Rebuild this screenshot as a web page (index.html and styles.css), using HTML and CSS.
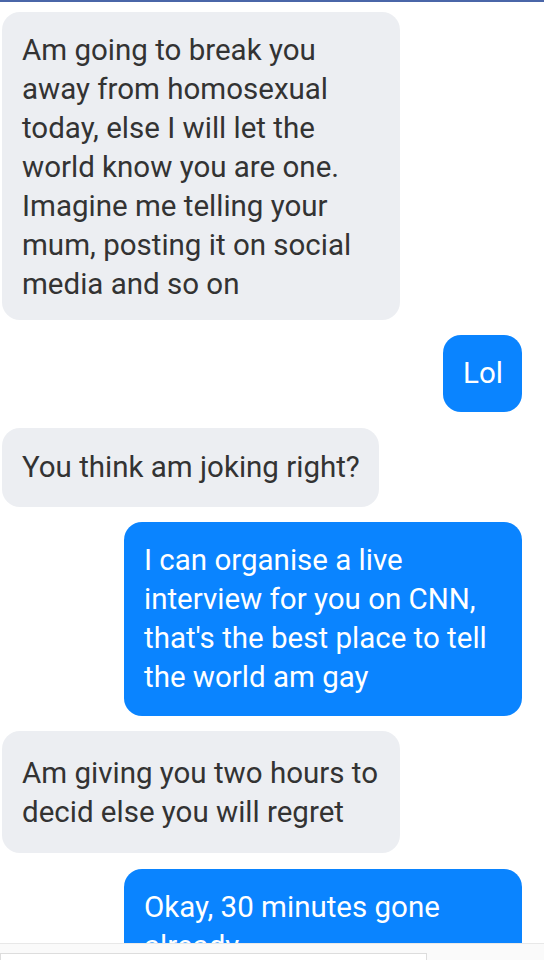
FILE: index.html
```html
<!DOCTYPE html>
<html lang="en">
<head>
    <meta charset="UTF-8">
    <meta name="viewport" content="width=device-width, initial-scale=1.0">
    <title>Chat</title>
    <link rel="stylesheet" href="styles.css">
</head>
<body>
    <div class="top-bar"></div>

    <div class="thread">
        <div class="msg theirs first">Am going to break you away from homosexual today, else I will let the world know you are one. Imagine me telling your mum, posting it on social media and so on</div>
        <div class="msg mine">Lol</div>
        <div class="msg theirs short">You think am joking right?</div>
        <div class="msg mine">I can organise a live interview for you on CNN, that's the best place to tell the world am gay</div>
        <div class="msg theirs tall">Am giving you two hours to decid else you will regret</div>
        <div class="msg mine last">Okay, 30 minutes gone already</div>
    </div>

    <div class="composer">
        <div class="composer-input"></div>
    </div>
</body>
</html>
```

FILE: styles.css
```css
body {
    margin: 0;
    background: #fff;
    font-family: Roboto, "Noto Sans", sans-serif;
}
.top-bar {
    height: 2px;
    background-color: #4a66a8;
}
.thread {
    height: 941px;
    overflow: hidden;
    display: flex;
    flex-direction: column;
    gap: 15px;
    padding: 10px 22px 0 2px;
    box-sizing: border-box;
}
.msg {
    flex-shrink: 0;
    max-width: 398px;
    box-sizing: border-box;
    padding: 19px 19px 19px 20px;
    border-radius: 18px;
    font-size: 29.5px;
    line-height: 39px;
}
.theirs {
    align-self: flex-start;
    background-color: #eceef2;
    color: #333;
}
.mine {
    align-self: flex-end;
    background-color: #0a84ff;
    color: #fff;
}
.first {
    padding-top: 19px;
    padding-bottom: 16px;
}
.short {
    margin-top: 1px;
    padding-top: 20px;
    padding-bottom: 20px;
}
.tall {
    padding-top: 23px;
    padding-bottom: 21px;
}
.last {
    margin-top: 1px;
}
.composer {
    height: 17px;
    border-top: 1px solid #e8e8e8;
    background: #fafafa;
    padding-top: 9px;
    box-sizing: border-box;
}
.composer-input {
    width: 425px;
    height: 8px;
    background: #fff;
    border: 1px solid #ddd;
    border-bottom: none;
}
```
